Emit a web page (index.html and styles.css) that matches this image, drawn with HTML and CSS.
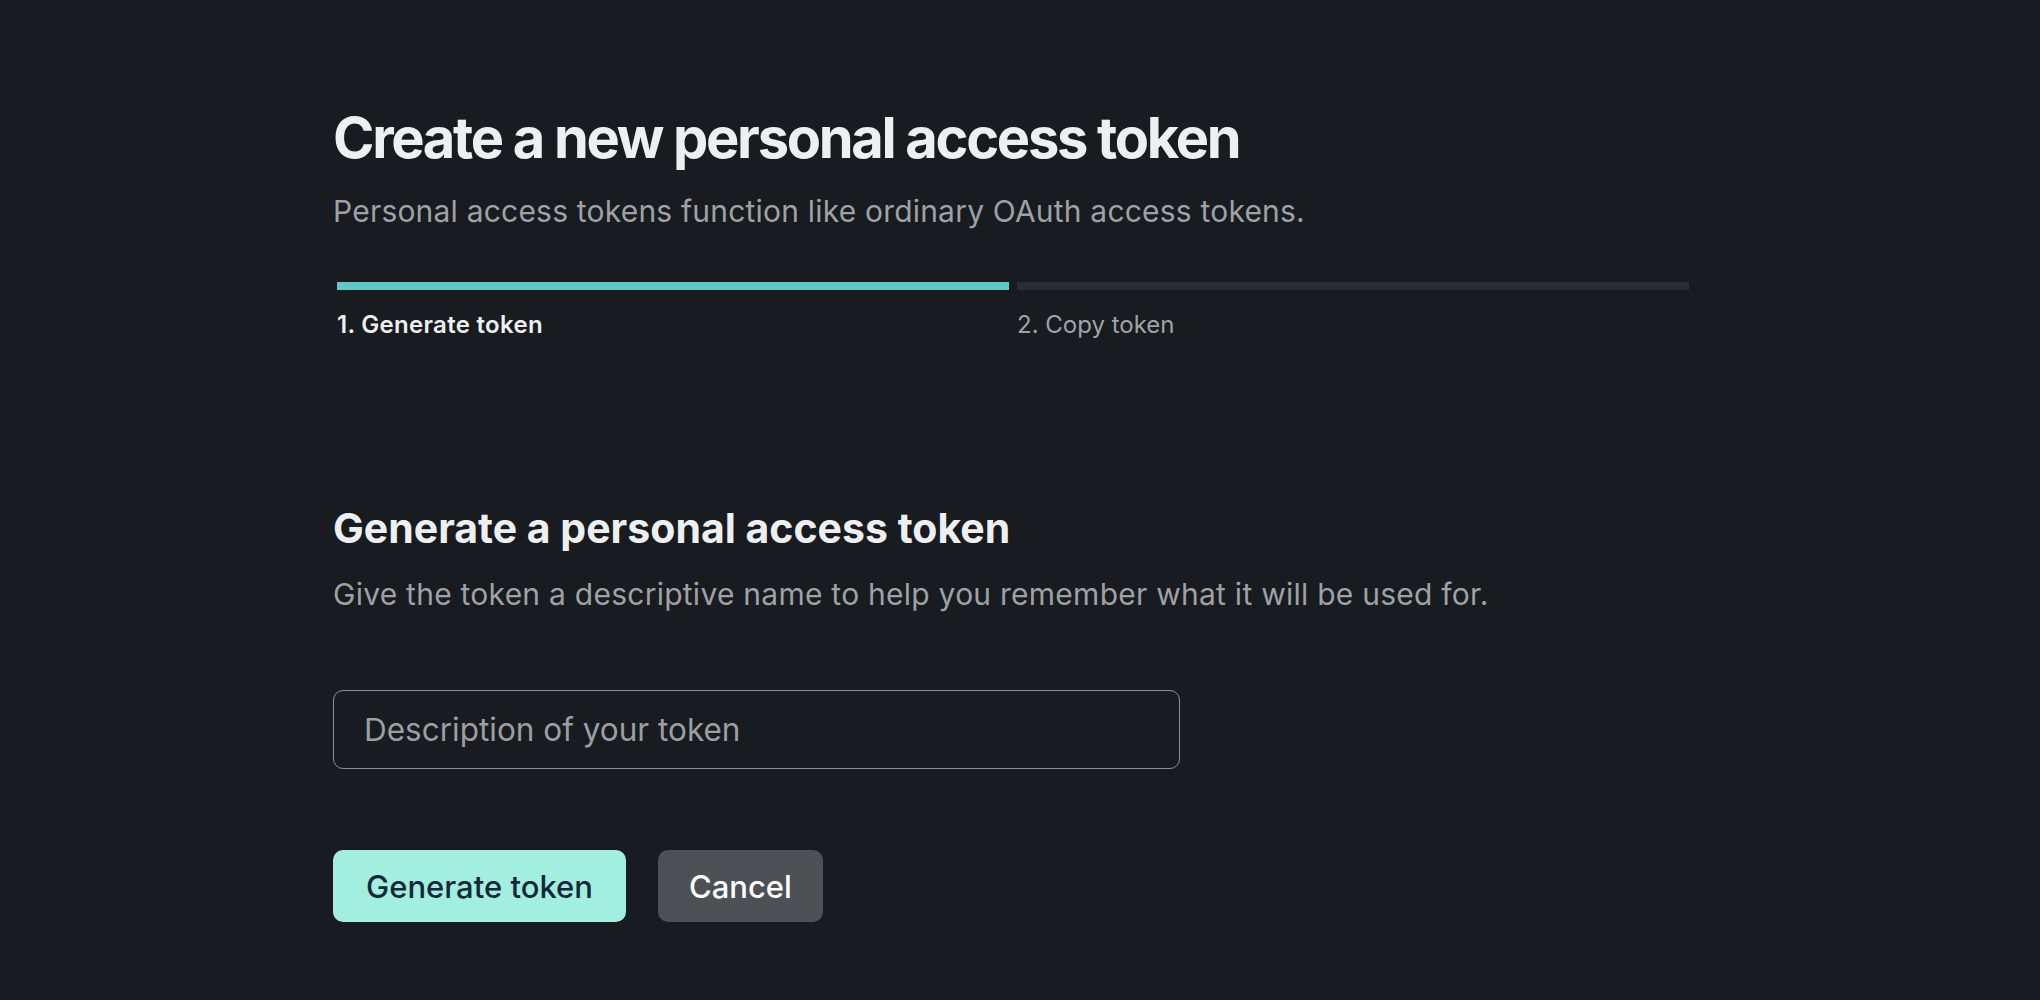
FILE: index.html
```html
<!DOCTYPE html>
<html lang="en">
<head>
<meta charset="utf-8">
<title>Create a new personal access token</title>
<link rel="stylesheet" href="styles.css">
</head>
<body>
<main class="page">
  <header class="intro">
    <h1 class="title">Create a new personal access token</h1>
    <p class="subtitle">Personal access tokens function like ordinary OAuth access tokens.</p>
  </header>
  <ol class="steps">
    <li class="step step--active">
      <div class="step__bar"></div>
      <span class="step__label">1. Generate token</span>
    </li>
    <li class="step">
      <div class="step__bar"></div>
      <span class="step__label">2. Copy token</span>
    </li>
  </ol>
  <section class="form">
    <h2 class="form__title">Generate a personal access token</h2>
    <p class="form__desc">Give the token a descriptive name to help you remember what it will be used for.</p>
    <input class="form__input" type="text" placeholder="Description of your token">
    <div class="form__actions">
      <button class="btn btn--primary" type="button">Generate token</button>
      <button class="btn btn--secondary" type="button">Cancel</button>
    </div>
  </section>
</main>
</body>
</html>
```
FILE: styles.css
```css
* { box-sizing: border-box; }
html, body {
  margin: 0;
  padding: 0;
  background: #181b1f;
  height: 100%;
}
body {
  font-family: Inter, "Noto Sans", "Liberation Sans", sans-serif;
  color: #eeeff1;
}
.page {
  width: 1360px;
  margin-left: 333px;
  padding-top: 105px;
}
.title {
  margin: 0;
  font-size: 56px;
  line-height: 67px;
  font-weight: 700;
  letter-spacing: -2.3px;
  color: #eeeff1;
}
.subtitle {
  margin: 21px 0 0;
  font-size: 30px;
  line-height: 36px;
  letter-spacing: 0.2px;
  color: #9fa1a5;
}
.steps {
  list-style: none;
  margin: 53px 0 0;
  padding: 0;
  display: flex;
}
.step {
  flex: 1;
  padding: 0 4px;
}
.step__bar {
  height: 8px;
  background: #2a2d31;
}
.step--active .step__bar {
  background: #63c6c6;
}
.step__label {
  display: block;
  margin-top: 20px;
  font-size: 24px;
  line-height: 30px;
  color: #a0a3a7;
}
.step--active .step__label {
  color: #eeeff1;
  font-weight: 600;
  letter-spacing: 0.3px;
}
.form {
  margin-top: 164px;
}
.form__title {
  margin: 0;
  font-size: 41px;
  line-height: 48px;
  font-weight: 700;
  color: #eeeff1;
}
.form__desc {
  margin: 24px 0 0;
  font-size: 30px;
  line-height: 36px;
  letter-spacing: 0.25px;
  color: #9fa1a5;
}
.form__input {
  display: block;
  margin-top: 78px;
  width: 847px;
  height: 79px;
  padding: 0 30px;
  border: 1px solid #8d8f93;
  border-radius: 10px;
  background: transparent;
  font-family: inherit;
  font-size: 31.5px;
  color: #eeeff1;
  outline: none;
}
.form__input::placeholder {
  color: #9c9ea2;
  opacity: 1;
}
.form__actions {
  margin-top: 81px;
  display: flex;
  gap: 32px;
}
.btn {
  height: 72px;
  padding: 0 33px;
  border: none;
  border-radius: 10px;
  font-family: inherit;
  font-size: 31px;
  font-weight: 500;
  cursor: pointer;
}
.btn--primary {
  background: #a3efdf;
  color: #13283a;
}
.btn--secondary {
  padding: 0 31px;
  background: #4d5055;
  color: #ffffff;
}
```
